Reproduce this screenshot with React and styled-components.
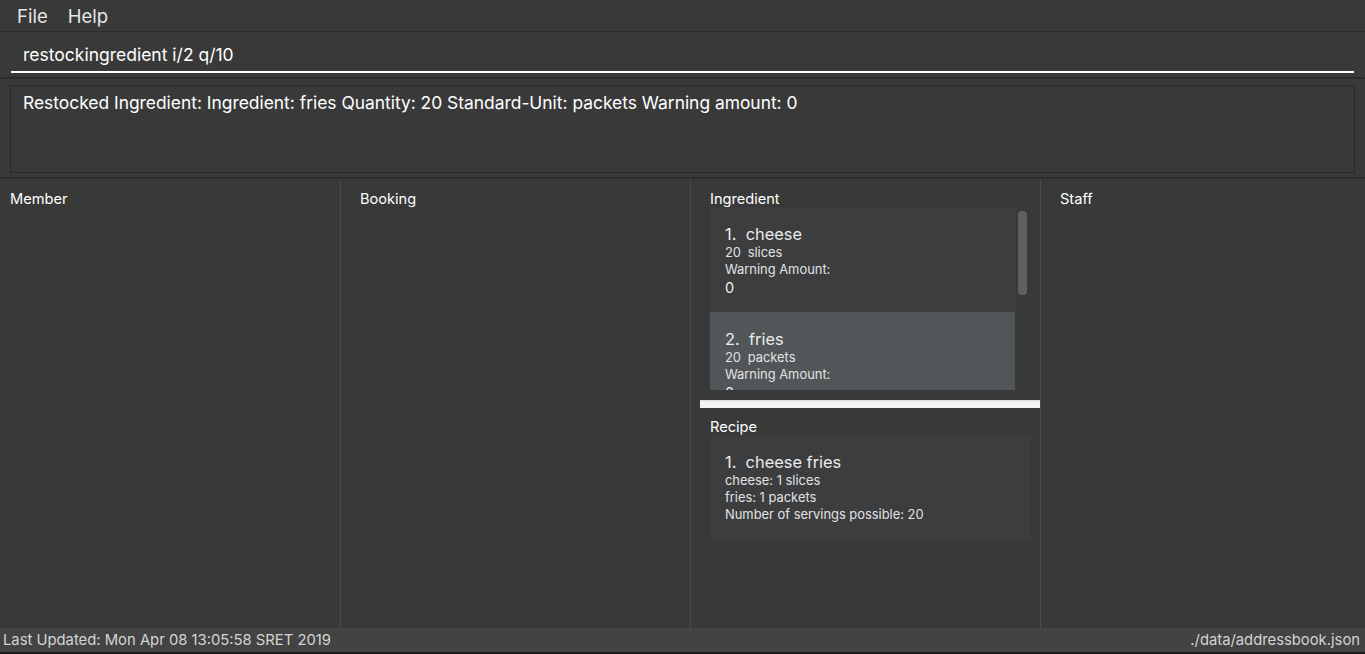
import React from "react";
import styled, { createGlobalStyle } from "styled-components";

const Global = createGlobalStyle`
  html, body { margin: 0; padding: 0; background: #393939; }
  body { font-family: "Inter", "Roboto", "Liberation Sans", sans-serif; color: #fff; }
  * { box-sizing: border-box; }
`;

const Window = styled.div`
  width: 1365px;
  height: 654px;
  display: flex;
  flex-direction: column;
  background: #393939;
  overflow: hidden;
`;

const MenuBar = styled.div`
  height: 32px;
  display: flex;
  align-items: center;
  gap: 20px;
  padding-left: 17px;
  border-bottom: 1px solid #2b2b2b;
  font-size: 18.5px;
  color: #e6e6e6;
`;

const CommandArea = styled.div`
  height: 47px;
  padding: 8px 11px 0 11px;
  border-bottom: 2px solid #2c2c2c;
`;

const CommandInput = styled.div`
  height: 33px;
  border-bottom: 2px solid #ffffff;
  padding-left: 12px;
  font-size: 17.5px;
  line-height: 30px;
  color: #fff;
`;

const ResultArea = styled.div`
  height: 100px;
  padding: 6px 10px 0 10px;
  border-bottom: 2px solid #2c2c2c;
`;

const ResultBox = styled.div`
  height: 88px;
  border: 1px solid #2a2a2a;
  padding: 5px 12px;
  font-size: 17.4px;
  line-height: 24px;
  color: #fff;
`;

const Panels = styled.div`
  flex: 1;
  display: grid;
  grid-template-columns: 341px 350px 350px 1fr;
  min-height: 0;
`;

const Panel = styled.div`
  border-right: ${(p) => (p.$last ? "none" : "1px solid #4a4a4a")};
  padding: ${(p) => (p.$first ? "11px 10px" : "11px 10px 11px 19px")};
  display: flex;
  flex-direction: column;
  min-height: 0;
`;

const PanelTitle = styled.div`
  font-size: 14.6px;
  line-height: 17px;
  padding-top: 1px;
  margin-bottom: -1px;
  color: #fff;
`;

const ListArea = styled.div`
  height: 183px;
  display: flex;
  gap: 3px;
  overflow: hidden;
`;

const CardList = styled.div`
  width: 305px;
  display: flex;
  flex-direction: column;
  overflow: hidden;
`;

const ScrollTrack = styled.div`
  width: 9px;
  padding-top: 4px;
`;

const ScrollThumb = styled.div`
  height: 84px;
  border-radius: 4px;
  background: #5f5f5f;
`;

const Card = styled.div`
  flex: none;
  height: 105px;
  background: ${(p) => (p.$selected ? "#515658" : "#3c3d3f")};
  padding: 17px 15px 15px;
  color: #e6e6e6;
`;

const CardName = styled.div`
  font-size: 16.4px;
  line-height: 20px;
  color: #ececec;
`;

const CardLine = styled.div`
  font-size: 12.9px;
  line-height: 17px;
  color: #e2e2e2;
  word-spacing: ${(p) => (p.$wide ? "3px" : "0")};
`;

const CardValue = styled.div`
  font-size: 14.5px;
  line-height: 19px;
  color: #ececec;
`;

const Splitter = styled.div`
  margin: 10px -10px 0 -10px;
  height: 8px;
  background: linear-gradient(#d8d8d8 0, #f4f4f4 2px, #f4f4f4 100%);
`;

const RecipeSection = styled.div`
  padding-top: 10px;
`;

const RecipeCard = styled(Card)`
  width: 320px;
`;

const StatusBar = styled.div`
  height: 26px;
  display: flex;
  justify-content: space-between;
  align-items: center;
  background: #434343;
  border-bottom: 2px solid #1a1a1a;
  padding: 0 5px 0 3px;
  font-size: 14.8px;
  color: #d4d4d4;
`;

const ingredients = [
  { idx: 1, name: "cheese", qty: 20, unit: "slices", warn: 0 },
  { idx: 2, name: "fries", qty: 20, unit: "packets", warn: 0, selected: true },
];

export default function App() {
  return (
    <>
      <Global />
      <Window>
        <MenuBar>
          <span>File</span>
          <span>Help</span>
        </MenuBar>
        <CommandArea>
          <CommandInput>restockingredient i/2 q/10</CommandInput>
        </CommandArea>
        <ResultArea>
          <ResultBox>
            Restocked Ingredient: Ingredient: fries Quantity: 20 Standard-Unit: packets Warning amount: 0
          </ResultBox>
        </ResultArea>
        <Panels>
          <Panel $first>
            <PanelTitle>Member</PanelTitle>
          </Panel>
          <Panel>
            <PanelTitle>Booking</PanelTitle>
          </Panel>
          <Panel>
            <PanelTitle>Ingredient</PanelTitle>
            <ListArea>
              <CardList>
                {ingredients.map((ing) => (
                  <Card key={ing.idx} $selected={ing.selected}>
                    <CardName>
                      {ing.idx}.&nbsp;&nbsp;{ing.name}
                    </CardName>
                    <CardLine $wide>
                      {ing.qty} {ing.unit}
                    </CardLine>
                    <CardLine>Warning Amount:</CardLine>
                    <CardValue>{ing.warn}</CardValue>
                  </Card>
                ))}
              </CardList>
              <ScrollTrack>
                <ScrollThumb />
              </ScrollTrack>
            </ListArea>
            <Splitter />
            <RecipeSection>
              <PanelTitle>Recipe</PanelTitle>
              <RecipeCard>
                <CardName>1.&nbsp;&nbsp;cheese fries</CardName>
                <CardLine>cheese: 1 slices</CardLine>
                <CardLine>fries: 1 packets</CardLine>
                <CardLine>Number of servings possible: 20</CardLine>
              </RecipeCard>
            </RecipeSection>
          </Panel>
          <Panel $last>
            <PanelTitle>Staff</PanelTitle>
          </Panel>
        </Panels>
        <StatusBar>
          <span>Last Updated: Mon Apr 08 13:05:58 SRET 2019</span>
          <span>./data/addressbook.json</span>
        </StatusBar>
      </Window>
    </>
  );
}
